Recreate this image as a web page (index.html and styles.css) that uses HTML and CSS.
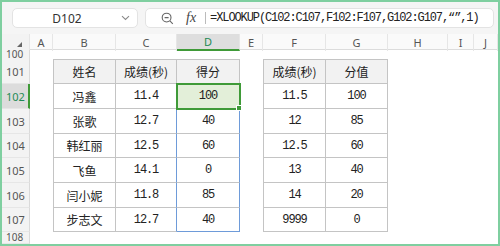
FILE: index.html
```html
<!DOCTYPE html>
<html lang="zh-CN">

<head>
  <meta charset="UTF-8">
  <title>XLOOKUP 成绩评分</title>
  <link rel="stylesheet" href="styles.css">
</head>

<body>
  <div class="window">
    <div class="toolbar">
      <div class="namebox">
        <span class="ref">D102</span>
        <svg class="chev" width="9" height="6" viewBox="0 0 9 6"><path d="M1 1.2 L4.5 4.5 L8 1.2" fill="none" stroke="#8a8a8a" stroke-width="1.1"/></svg>
      </div>
      <div class="formula">
        <svg class="zoomicon" width="13" height="13" viewBox="0 0 13 13">
          <circle cx="5.6" cy="5.6" r="4.4" fill="none" stroke="#666" stroke-width="1.1"/>
          <path d="M3.6 5.6 H7.6 M8.9 8.9 L11.8 11.8" stroke="#666" stroke-width="1.1"/>
        </svg>
        <span class="fx">fx</span>
        <span class="sep"></span>
        <span class="expr">=XLOOKUP(C102:C107,F102:F107,G102:G107,“”,1)</span>
      </div>
    </div>

    <div class="sheet">
      <div class="row colhead">
        <div class="corner"><span class="tri"></span></div>
        <div>A</div><div>B</div><div>C</div><div class="on">D</div><div>E</div>
        <div>F</div><div>G</div><div>H</div><div>I</div><div>J</div>
      </div>

      <div class="row r100">
        <div class="rh">100</div>
      </div>

      <div class="row r25">
        <div class="rh">101</div><div></div>
        <div class="c th first cjk">姓名</div><div class="c th cjk">成绩(秒)</div><div class="c th cjk">得分</div>
        <div></div>
        <div class="c th first cjk">成绩(秒)</div><div class="c th cjk">分值</div>
      </div>

      <div class="row r25">
        <div class="rh on">102</div><div></div>
        <div class="c first cjk">冯鑫</div><div class="c num edge">11.4</div><div class="c num rng active">100</div>
        <div></div>
        <div class="c first num">11.5</div><div class="c num">100</div>
      </div>

      <div class="row r25">
        <div class="rh">103</div><div></div>
        <div class="c first cjk">张歌</div><div class="c num edge">12.7</div><div class="c num rng">40</div>
        <div></div>
        <div class="c first num">12</div><div class="c num">85</div>
      </div>

      <div class="row r24">
        <div class="rh">104</div><div></div>
        <div class="c first cjk">韩红丽</div><div class="c num edge">12.5</div><div class="c num rng">60</div>
        <div></div>
        <div class="c first num">12.5</div><div class="c num">60</div>
      </div>

      <div class="row r25">
        <div class="rh">105</div><div></div>
        <div class="c first cjk">飞鱼</div><div class="c num edge">14.1</div><div class="c num rng">0</div>
        <div></div>
        <div class="c first num">13</div><div class="c num">40</div>
      </div>

      <div class="row r25">
        <div class="rh">106</div><div></div>
        <div class="c first cjk">闫小妮</div><div class="c num edge">11.8</div><div class="c num rng">85</div>
        <div></div>
        <div class="c first num">14</div><div class="c num">20</div>
      </div>

      <div class="row r24">
        <div class="rh">107</div><div></div>
        <div class="c first cjk">步志文</div><div class="c num edge">12.7</div><div class="c num rng last">40</div>
        <div></div>
        <div class="c first num">9999</div><div class="c num">0</div>
      </div>

      <div class="row r108">
        <div class="rh">108</div>
      </div>
    </div>
  </div>
</body>

</html>
```

FILE: styles.css
```css
body {
  margin: 0;
  font-family: "Noto Sans", "Noto Sans CJK SC", sans-serif;
  color: #222;
}

.window {
  width: 500px;
  height: 246px;
  box-sizing: border-box;
  border: 2px solid #7fcfa0;
  background: #fff;
  overflow: hidden;
}

/* name box + formula bar */
.toolbar {
  height: 32px;
  display: flex;
  align-items: center;
  gap: 7px;
  padding: 0 4px 0 10px;
  background: #f5f5f5;
}

.namebox {
  width: 126px;
  height: 20px;
  box-sizing: border-box;
  display: flex;
  align-items: center;
  background: #fff;
  border: 1px solid #e3e3e3;
  border-radius: 5px;
}

.namebox .ref {
  flex: 1;
  text-align: center;
  font-size: 12px;
  color: #333;
}

.namebox .chev {
  margin-right: 7px;
}

.formula {
  flex: 1;
  height: 20px;
  box-sizing: border-box;
  display: flex;
  align-items: center;
  background: #fff;
  border: 1px solid #e3e3e3;
  border-radius: 5px;
  padding-left: 15px;
}

.zoomicon {
  margin-right: 12px;
}

.fx {
  font-family: "Liberation Serif", serif;
  font-style: italic;
  font-size: 14px;
  color: #444;
}

.sep {
  width: 1px;
  height: 12px;
  background: #bbb;
  margin: 0 4px 0 9px;
}

.expr {
  font-family: "Liberation Mono", monospace;
  font-size: 12px;
  letter-spacing: -1.1px;
  color: #222;
  white-space: nowrap;
}

/* sheet grid */
.row {
  display: grid;
  grid-template-columns: 28px 23px 63px 61px 63px 23px 63px 62px 60px 26px 1fr;
  box-sizing: border-box;
}

.row > div {
  display: flex;
  align-items: center;
  justify-content: center;
  box-sizing: border-box;
}

.colhead {
  height: 16px;
  background: #fafafa;
  border-bottom: 1px solid #dcdcdc;
  font-size: 11px;
  color: #555;
}

.colhead > div {
  border-right: 1px solid #e6e6e6;
}

.colhead .on {
  background: #dedede;
  color: #1f8a55;
  border-bottom: 2px solid #3f9a38;
}

.corner {
  background: #f3f3f3;
}

.tri {
  width: 0;
  height: 0;
  border-left: 5px solid transparent;
  border-bottom: 5px solid #666;
  margin: 4px 0 0 8px;
}

.r100 { height: 9px; }
.r25 { height: 25px; }
.r24 { height: 24px; }
.r108 { height: 12px; }

.rh {
  background: #f3f3f3;
  border-right: 1px solid #dadada;
  border-bottom: 1px solid #e6e6e6;
  font-size: 11px;
  color: #555;
  justify-content: flex-start !important;
  padding-left: 4px;
}

.r100 .rh,
.r108 .rh {
  font-size: 10px;
  line-height: 9px;
  align-items: flex-end;
}

.r108 .rh {
  padding-bottom: 1px;
}

.rh.on {
  background: #dcdcdc;
  color: #1f8a55;
  border-right: 2px solid #3f9a38;
}

/* table cells */
.c {
  border-right: 1px solid #c4c4c4;
  border-bottom: 1px solid #c4c4c4;
  font-size: 12px;
}

.c.first {
  border-left: 1px solid #c4c4c4;
}

.c.th {
  border-top: 1px solid #c4c4c4;
  background: #f2f2f2;
}

.cjk {
  font-family: "Noto Sans CJK SC", sans-serif;
  color: #222;
}

.num {
  font-family: "Liberation Mono", monospace;
  letter-spacing: -1.1px;
  color: #222;
}

.c.edge {
  border-right-color: #6e9bd9;
}

.c.rng {
  border-right-color: #6e9bd9;
}

.c.rng.last {
  border-bottom-color: #6e9bd9;
}

.c.active {
  position: relative;
  background: #e3efd9;
  outline: 2px solid #3f9a38;
  outline-offset: -1px;
}

.c.active::after {
  content: "";
  position: absolute;
  right: -3px;
  bottom: -3px;
  width: 4px;
  height: 4px;
  background: #3f9a38;
  border: 1px solid #fff;
  z-index: 2;
}
```
